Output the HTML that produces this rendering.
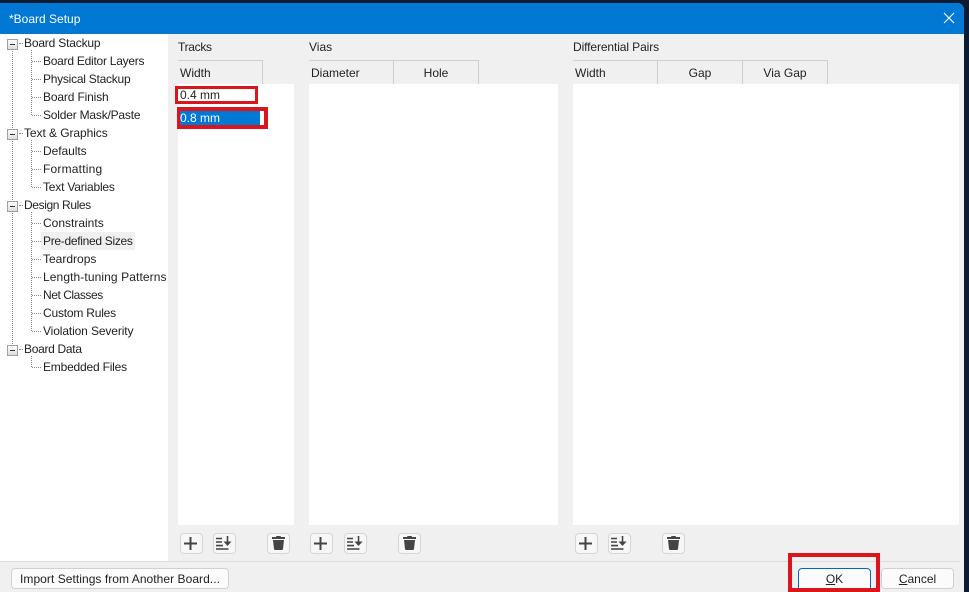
<!DOCTYPE html>
<html><head><meta charset="utf-8">
<style>
html,body{margin:0;padding:0;width:969px;height:592px;overflow:hidden;background:#0b1b33}
body{position:relative;font-family:"Liberation Sans",sans-serif;font-size:12px;color:#222}
div,span,svg{position:absolute;box-sizing:border-box}
.t{white-space:nowrap;line-height:16px;height:16px}
.p{background:#fff}
.h{top:60px;height:24px;border-top:1px solid #cfcfcf;border-right:1px solid #cfcfcf;background:#f0f0f0;line-height:25px;white-space:nowrap}
.r{border:3px solid #dc141c;background:transparent}
.b{width:23px;height:21px;border:1px solid #d6d6d6;border-radius:4px;background:#f7f7f7;top:533px}
.btn{border:1px solid #d0d0d0;border-radius:4px;background:#fbfbfb;text-align:center;white-space:nowrap;height:21px;line-height:20px}
.d{border-left:1px dotted #888}
.e{border-top:1px dotted #888;height:0}
.x{width:11px;height:11px;border:1px solid #a0a0a0;background:linear-gradient(#fff,#dcdcdc)}
.x:after{content:"";position:absolute;left:2px;top:4px;width:5px;height:1px;background:#333}
</style></head><body>
<div style="left:0;top:3px;width:964px;height:589px;background:#f0f0f0;border-top-right-radius:7px;overflow:hidden">
<div style="left:0;top:0;width:964px;height:31px;background:#0078d4"></div>
</div>
<div class="t" style="left:9px;top:11px;color:#fff;font-size:12px">*Board Setup</div>
<svg style="left:943px;top:12px" width="12" height="12" viewBox="0 0 12 12"><path d="M1 1L11 11M11 1L1 11" stroke="#fff" stroke-width="1.1" fill="none"/></svg>

<div class="p" style="left:0;top:34px;width:168px;height:527px"></div>

<div class="d" style="left:12px;top:48px;height:300px"></div>
<div class="d" style="left:31px;top:50px;height:65px"></div>
<div class="d" style="left:31px;top:140px;height:47px"></div>
<div class="d" style="left:31px;top:212px;height:119px"></div>
<div class="d" style="left:31px;top:356px;height:11px"></div>

<div class="e" style="left:19px;top:43px;width:4px"></div>
<div class="e" style="left:19px;top:133px;width:4px"></div>
<div class="e" style="left:19px;top:205px;width:4px"></div>
<div class="e" style="left:19px;top:349px;width:4px"></div>
<div class="e" style="left:32px;top:61px;width:9px"></div>
<div class="e" style="left:32px;top:79px;width:9px"></div>
<div class="e" style="left:32px;top:97px;width:9px"></div>
<div class="e" style="left:32px;top:115px;width:9px"></div>
<div class="e" style="left:32px;top:151px;width:9px"></div>
<div class="e" style="left:32px;top:169px;width:9px"></div>
<div class="e" style="left:32px;top:187px;width:9px"></div>
<div class="e" style="left:32px;top:223px;width:9px"></div>
<div class="e" style="left:32px;top:241px;width:9px"></div>
<div class="e" style="left:32px;top:259px;width:9px"></div>
<div class="e" style="left:32px;top:277px;width:9px"></div>
<div class="e" style="left:32px;top:295px;width:9px"></div>
<div class="e" style="left:32px;top:313px;width:9px"></div>
<div class="e" style="left:32px;top:331px;width:9px"></div>
<div class="e" style="left:32px;top:367px;width:9px"></div>

<div class="x" style="left:7px;top:39px"></div>
<div class="x" style="left:7px;top:129px"></div>
<div class="x" style="left:7px;top:201px"></div>
<div class="x" style="left:7px;top:345px"></div>

<div style="left:41px;top:232px;width:94px;height:18px;background:#f0f0f0"></div>

<div class="t" style="left:24px;top:35px;letter-spacing:-.18px">Board Stackup</div>
<div class="t" style="left:43px;top:53px;letter-spacing:-.25px">Board Editor Layers</div>
<div class="t" style="left:43px;top:71px;letter-spacing:-.25px">Physical Stackup</div>
<div class="t" style="left:43px;top:89px;letter-spacing:-.15px">Board Finish</div>
<div class="t" style="left:43px;top:107px;letter-spacing:-.2px">Solder Mask/Paste</div>
<div class="t" style="left:24px;top:125px;letter-spacing:-.07px">Text &amp; Graphics</div>
<div class="t" style="left:43px;top:143px;letter-spacing:-.05px">Defaults</div>
<div class="t" style="left:43px;top:161px;letter-spacing:.2px">Formatting</div>
<div class="t" style="left:43px;top:179px;letter-spacing:-.2px">Text Variables</div>
<div class="t" style="left:24px;top:197px;letter-spacing:-.38px">Design Rules</div>
<div class="t" style="left:43px;top:215px">Constraints</div>
<div class="t" style="left:43px;top:233px;letter-spacing:-.3px">Pre-defined Sizes</div>
<div class="t" style="left:43px;top:251px">Teardrops</div>
<div class="t" style="left:43px;top:269px;letter-spacing:.1px">Length-tuning Patterns</div>
<div class="t" style="left:43px;top:287px;letter-spacing:-.45px">Net Classes</div>
<div class="t" style="left:43px;top:305px;letter-spacing:-.2px">Custom Rules</div>
<div class="t" style="left:43px;top:323px;letter-spacing:-.12px">Violation Severity</div>
<div class="t" style="left:24px;top:341px;letter-spacing:-.3px">Board Data</div>
<div class="t" style="left:43px;top:359px;letter-spacing:-.2px">Embedded Files</div>

<div class="t" style="left:178px;top:39px;letter-spacing:-.3px">Tracks</div>
<div class="t" style="left:309px;top:39px">Vias</div>
<div class="t" style="left:573px;top:39px;letter-spacing:-.1px">Differential Pairs</div>

<div class="p" style="left:178px;top:84px;width:116px;height:441px"></div>
<div class="p" style="left:309px;top:84px;width:249px;height:441px"></div>
<div class="p" style="left:573px;top:84px;width:386px;height:441px"></div>

<div class="h" style="left:178px;width:85px;padding-left:2px">Width</div>
<div class="h" style="left:309px;width:85px;padding-left:2px">Diameter</div>
<div class="h" style="left:394px;width:85px;text-align:center">Hole</div>
<div class="h" style="left:573px;width:85px;padding-left:2px">Width</div>
<div class="h" style="left:658px;width:85px;text-align:center">Gap</div>
<div class="h" style="left:743px;width:85px;text-align:center">Via Gap</div>

<div style="left:178px;top:109px;width:85px;height:17px;background:#0078d4"></div>
<div style="left:260px;top:110px;width:4px;height:15px;background:#fff"></div>
<div class="t" style="left:180px;top:87px">0.4 mm</div>
<div class="t" style="left:180px;top:110px;color:#fff">0.8 mm</div>
<div class="r" style="left:175px;top:86px;width:83px;height:18px"></div>
<div class="r" style="left:177px;top:107px;width:91px;height:22px;border-width:4px 4px 4px 3px"></div>

<div class="b" style="left:180px"></div>
<svg style="left:180px;top:533px" width="23" height="21" viewBox="0 0 23 21"><path d="M10.5 4V17M4 10.5H17" stroke="#444" stroke-width="2" fill="none"/></svg>
<div class="b" style="left:213px"></div>
<svg style="left:213px;top:533px" width="23" height="21" viewBox="0 0 23 21"><path d="M3 5.5H9M3 9H9M3 12.6H10M3 16H15.5M14.5 3V9" stroke="#444" stroke-width="1.6" fill="none"/><path d="M10.5 8.5H18.5L14.5 13Z" fill="#444"/></svg>
<div class="b" style="left:267px"></div>
<svg style="left:267px;top:533px" width="23" height="21" viewBox="0 0 23 21"><path d="M5 4H9L9.5 3H13.5L14 4H18V6H5ZM6 7H17L16 16A1.2 1.2 0 0 1 15 17H8A1.2 1.2 0 0 1 7 16Z" fill="#444"/></svg>

<div class="b" style="left:310px"></div>
<svg style="left:310px;top:533px" width="23" height="21" viewBox="0 0 23 21"><path d="M10.5 4V17M4 10.5H17" stroke="#444" stroke-width="2" fill="none"/></svg>
<div class="b" style="left:344px"></div>
<svg style="left:344px;top:533px" width="23" height="21" viewBox="0 0 23 21"><path d="M3 5.5H9M3 9H9M3 12.6H10M3 16H15.5M14.5 3V9" stroke="#444" stroke-width="1.6" fill="none"/><path d="M10.5 8.5H18.5L14.5 13Z" fill="#444"/></svg>
<div class="b" style="left:398px"></div>
<svg style="left:398px;top:533px" width="23" height="21" viewBox="0 0 23 21"><path d="M5 4H9L9.5 3H13.5L14 4H18V6H5ZM6 7H17L16 16A1.2 1.2 0 0 1 15 17H8A1.2 1.2 0 0 1 7 16Z" fill="#444"/></svg>

<div class="b" style="left:575px"></div>
<svg style="left:575px;top:533px" width="23" height="21" viewBox="0 0 23 21"><path d="M10.5 4V17M4 10.5H17" stroke="#444" stroke-width="2" fill="none"/></svg>
<div class="b" style="left:608px"></div>
<svg style="left:608px;top:533px" width="23" height="21" viewBox="0 0 23 21"><path d="M3 5.5H9M3 9H9M3 12.6H10M3 16H15.5M14.5 3V9" stroke="#444" stroke-width="1.6" fill="none"/><path d="M10.5 8.5H18.5L14.5 13Z" fill="#444"/></svg>
<div class="b" style="left:662px"></div>
<svg style="left:662px;top:533px" width="23" height="21" viewBox="0 0 23 21"><path d="M5 4H9L9.5 3H13.5L14 4H18V6H5ZM6 7H17L16 16A1.2 1.2 0 0 1 15 17H8A1.2 1.2 0 0 1 7 16Z" fill="#444"/></svg>

<div style="left:0;top:561px;width:960px;height:1px;background:#dcdcdc"></div>

<div class="btn" style="left:11px;top:568px;width:218px;letter-spacing:.05px">Import Settings from Another Board...</div>
<div class="btn" style="left:798px;top:568px;width:73px;height:24px;border-color:#0067c0"><u>O</u>K</div>
<div class="btn" style="left:881px;top:568px;width:73px"><u>C</u>ancel</div>
<div class="r" style="left:788px;top:553px;width:92px;height:39px;border-width:4px"></div>
</body></html>
